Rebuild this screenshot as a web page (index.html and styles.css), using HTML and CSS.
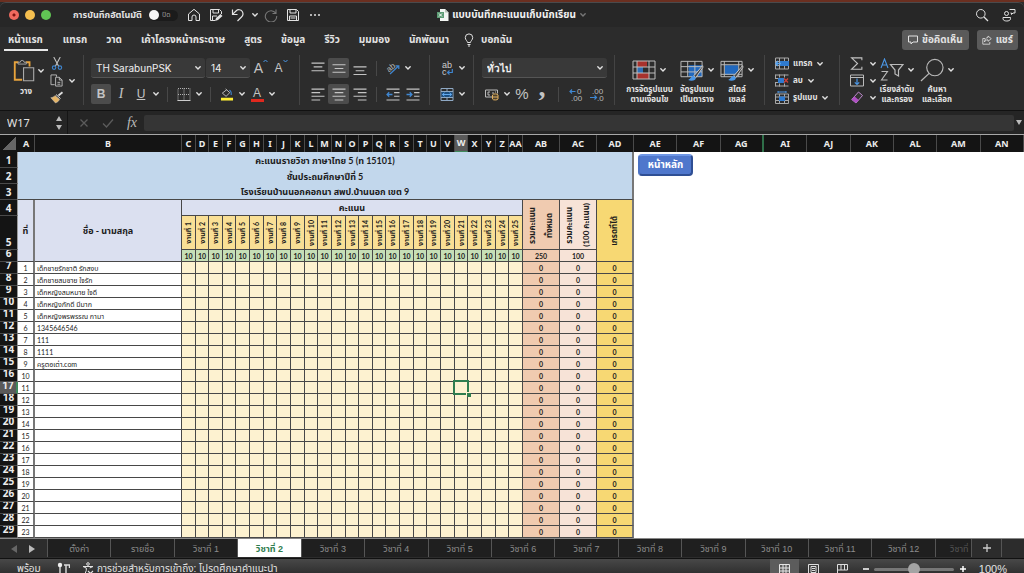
FILE: index.html
```
<!DOCTYPE html>
<html lang="th">
<head>
<meta charset="utf-8">
<meta name="viewport" content="width=device-width, initial-scale=1">
<title>แบบบันทึกคะแนนเก็บนักเรียน</title>
<link rel="stylesheet" href="styles.css">
</head>
<body>
<svg class="defs" aria-hidden="true">
  <symbol id="chev" viewBox="0 0 8 8"><path d="M1.8 2.8 4 5l2.200-2.200" fill="none" stroke="currentColor" stroke-width="1.400" stroke-linecap="round"/></symbol>
  <symbol id="home" viewBox="0 0 14 14"><path d="M1.500 6 7 1.300 12.500 6v6.500H9V9a2 2 0 0 0-4 0v3.500H1.500z" fill="none" stroke="currentColor" stroke-linejoin="round"/></symbol>
  <symbol id="disk" viewBox="0 0 14 14"><path d="M1.500 1.500h9l2 2v9h-11zM4 1.500v3.500h6V1.500M3.500 12.500V8h7v4.500M4.500 10h5" fill="none" stroke="currentColor"/></symbol>
  <symbol id="diskpen" viewBox="0 0 14 14"><path d="M6 12.500H1.500v-11h9l2 2V6M4 1.500v3.500h5.500V1.500M3.500 12.500V8H8" fill="none" stroke="currentColor"/><path d="M6 13l1-3 4.500-4 2 2-4.500 4z" fill="currentColor"/></symbol>
  <symbol id="undo" viewBox="0 0 14 14"><path d="M1.500 1.500v5h5M1.800 6.200 5 3c2-2 5-1.500 6.300.5 1.200 2 .7 4-.8 5.500L6.500 13" fill="none" stroke="currentColor" stroke-width="1.200"/></symbol>
  <symbol id="redo" viewBox="0 0 14 14"><path d="M12 1.500v4H8.500M11.800 5.300A5.700 5.700 0 1 0 12.700 8" fill="none" stroke="#777" stroke-width="1.100"/></symbol>
  <symbol id="search" viewBox="0 0 14 14"><circle cx="5.800" cy="5.800" r="4.300" fill="none" stroke="currentColor"/><path d="m9 9 4 4" stroke="currentColor" stroke-width="1.200"/></symbol>
  <symbol id="person" viewBox="0 0 14 14"><circle cx="4.500" cy="5.500" r="2" fill="none" stroke="currentColor"/><path d="M1 9.500h7.500v1.200C8.500 12.500 6.500 13 4.800 13S1 12.500 1 10.700zM7.500 1.500H13V5h-2L9.500 6.500V5h-1" fill="none" stroke="currentColor"/></symbol>
  <symbol id="xls" viewBox="0 0 12 14"><path d="M3 1h5l3.500 3.500V13H3z" fill="#f3f6f3"/><path d="M8 1v3.500h3.500z" fill="#b8c4b8"/><path d="M0 4h7v6H0z" fill="#5c9c74"/><path d="m2 5.500 3 3m0-3-3 3" stroke="#fff"/></symbol>
  <symbol id="bulb" viewBox="0 0 10 14"><path d="M3.500 9.500C3.500 8 1.300 7 1.300 4.600a3.700 3.700 0 0 1 7.400 0C8.700 7 6.500 8 6.500 9.500zM3.500 11.500h3M4 13h2" fill="none" stroke="currentColor"/></symbol>
  <symbol id="bubble" viewBox="0 0 10 10"><path d="M.5 1h9v6H5L3 9V7H.5z" fill="none" stroke="currentColor"/></symbol>
  <symbol id="share" viewBox="0 0 10 10"><path d="M3 3.500H.800v5.700h7V7M6 1l3.300 2.700L6 6.300V4.800C4.200 4.800 3 5.500 2.500 7c0-2.500 1.500-4.300 3.500-4.500z" fill="none" stroke="currentColor" stroke-width=".8"/></symbol>
  <symbol id="paste" viewBox="0 0 24 26"><path d="M10 22.500H2v-19h4M14 3.500h4V8" fill="none" stroke="#e8a33c" stroke-width="2"/><path d="M5.500 5.500V3.500H8a2 2 0 0 1 4 0h2.500v2z" fill="#2c2c2c" stroke="#aaa"/><path d="M11.500 9.500h11v14h-11z" fill="#333" stroke="#aaa" stroke-width="1.200"/></symbol>
  <symbol id="cut" viewBox="0 0 12 12"><path d="M3 0l4.500 8.500M9 0 4.500 8.500" stroke="#c4c4c4" fill="none"/><circle cx="3.300" cy="9.800" r="1.600" fill="none" stroke="#3f86d0"/><circle cx="8.700" cy="9.800" r="1.600" fill="none" stroke="#3f86d0"/></symbol>
  <symbol id="copy" viewBox="0 0 14 14"><path d="M4.500 11.500h-4V1h6v2" fill="none" stroke="#bbb"/><path d="M5.500 3.500h4l3 3v6.500h-7zM9.500 3.500v3h3M7.500 9h3M7.500 11h3" fill="none" stroke="#bbb"/></symbol>
  <symbol id="brush" viewBox="0 0 14 12"><path d="M12.500.8 8.500 4" stroke="#ddd" stroke-width="1.800"/><path d="m6 3 4.500 4" stroke="#ddd"/><path d="M5 4C4 5.500 2.500 6 .8 6.200L5.500 11.500C7.500 10.800 9 9.500 9.500 7.800z" fill="#e6b566" stroke="#c9c9c9" stroke-width=".5"/></symbol>
  <symbol id="grid" viewBox="0 0 13 13"><path d="M.5.500h12v12H.5zM6.500.500v12M.5 6.500h12" fill="none" stroke="#b0b0b0" stroke-dasharray="1 1"/><path d="M0 12.500h13" stroke="#ccc"/></symbol>
  <symbol id="bucket" viewBox="0 0 14 14"><path d="m5.500 1 4.500 4-4 4L2 5.500 6.500 2" fill="none" stroke="#c4c4c4"/><path d="M9.500 2.500c2 .5 2.300 2 2 5" fill="none" stroke="#3f86d0" stroke-width="1.200"/><path d="M.5 10.500h13v3H.5z" fill="#ffef36"/></symbol>
  <symbol id="al" viewBox="0 0 12 12"><path d="M0 1h12M0 4.300h8M0 7.600h12M0 11h8" stroke="currentColor"/></symbol>
  <symbol id="ac" viewBox="0 0 12 12"><path d="M0 1h12M2 4.300h8M0 7.600h12M2 11h8" stroke="currentColor"/></symbol>
  <symbol id="ar" viewBox="0 0 12 12"><path d="M0 1h12M4 4.300h8M0 7.600h12M4 11h8" stroke="currentColor"/></symbol>
  <symbol id="vt" viewBox="0 0 12 12"><path d="M0 1h12M2 4.500h8M0 8h12" stroke="currentColor"/></symbol>
  <symbol id="vm" viewBox="0 0 12 12"><path d="M0 2.500h12M2 6h8M0 9.500h12" stroke="currentColor"/></symbol>
  <symbol id="vb" viewBox="0 0 12 12"><path d="M0 4.500h12M2 8h8M0 11.500h12" stroke="currentColor"/></symbol>
  <symbol id="outd" viewBox="0 0 12 12"><path d="M0 1h12M7 4.300h5M7 7.600h5M0 11h12" stroke="currentColor"/><path d="M5.500 6H.5m2-2-2 2 2 2" fill="none" stroke="#3f86d0" stroke-width="1.200"/></symbol>
  <symbol id="ind" viewBox="0 0 12 12"><path d="M0 1h12M7 4.300h5M7 7.600h5M0 11h12" stroke="currentColor"/><path d="M0 6h5M3 4l2 2-2 2" fill="none" stroke="#3f86d0" stroke-width="1.200"/></symbol>
  <symbol id="merge" viewBox="0 0 13 13"><path d="M.5.500h12v12H.5zM.5 3.500h12M.5 9.500h12M6.500.500v3M6.500 9.500v3" fill="none" stroke="#8fa9c4"/><path d="M1 4h11v5H1z" fill="#1d4f80"/><path d="M2 6.500h9M4 4.800 2 6.500l2 1.700M9 4.800l2 1.700-2 1.700" fill="none" stroke="#62aaf0"/></symbol>
  <symbol id="money" viewBox="0 0 14 12"><path d="M7 8.500H.5v-7h12V5M5 3.500H3v3h2M8 3.500v2M10 3.500h1" fill="none" stroke="#bbb"/><path d="M7.500 6.500C7.500 5 13 5 13 6.500v4c0 1.300-5.500 1.300-5.500 0zM7.500 8.500h5.500" fill="#4a4030" stroke="#e0b060"/></symbol>
  <symbol id="cond" viewBox="0 0 24 20"><path d="M5 1h10v6H5zM5 13h12v6H5z" fill="#a8322d"/><path d="M5 7h6v6H5z" fill="#2f6fb5"/><path d="M1 1h22v18H1zM5 1v18M17 1v18M1 7h22M1 13h22" fill="none" stroke="#bdbdbd"/></symbol>
  <symbol id="ftable" viewBox="0 0 25 24"><path d="M9 7h14v12H9z" fill="#2168bd"/><path d="M1 3h22v16H1zM8 3v16M15.500 3v16M1 8.500h22M1 14h22" fill="none" stroke="#bdbdbd"/><path d="M23.500 7.500 14.500 18l2 2 7.500-11z" fill="#444" stroke="#ccc"/><path d="M14 18c-2 .3-2.500 2.500-5.500 4.500 3.500 1.500 8.500.5 8-2.500z" fill="#4b97e6"/></symbol>
  <symbol id="fcell" viewBox="0 0 25 24"><path d="M5 7h14v10H5z" fill="#2168bd"/><path d="M1 3h22v16H1zM4.500 3v16M19.500 3v16M1 6.500h22M1 16.500h22" fill="none" stroke="#bdbdbd"/><path d="M23.500 7.500 14.500 18l2 2 7.500-11z" fill="#444" stroke="#ccc"/><path d="M14 18c-2 .3-2.500 2.500-5.500 4.500 3.500 1.500 8.500.5 8-2.500z" fill="#4b97e6"/></symbol>
  <symbol id="cins" viewBox="0 0 14 12"><path d="M.5.500h13v11H.5zM4.500.500v11M9.500.500v11M.5 4h13M.5 8h13" fill="none" stroke="#a8a8a8"/><path d="M5 3.500h9v5H5z" fill="#2f7bd0"/><path d="M6 6H1m2-2.500L.8 6 3 8.500" fill="none" stroke="#5aa5f0" stroke-width="1.300"/></symbol>
  <symbol id="cdel" viewBox="0 0 14 12"><path d="M.5.500h13M.5 11.500h13M.5 0v3.500M4.500 0v3M9.500 0v3M4.500 9v3M9.500 9v3M.5 8.500V12M0 4h3M0 8h3" fill="none" stroke="#a8a8a8"/><path d="M3 3.500h6v5H3z" fill="#2f7bd0"/><path d="m9 4 4 4m0-4L9 8" stroke="#d0423a" stroke-width="1.300"/></symbol>
  <symbol id="cfmt" viewBox="0 0 14 13"><path d="M.5 3h13v9.500H.5zM4.500 3v9.500M9.500 3v9.500M.5 6h13M.5 9.500h13" fill="none" stroke="#a8a8a8"/><path d="M4 5.500h6v4.500H4z" fill="#2f7bd0"/><path d="M3 1h8M3 0v2M11 0v2" stroke="#4b97e6"/></symbol>
  <symbol id="sum" viewBox="0 0 12 12"><path d="M10.500 3V.8H1L6.500 6 1 11.300h9.500V9" fill="none" stroke="#c4c4c4"/></symbol>
  <symbol id="fill" viewBox="0 0 14 12"><path d="M.5.500h13v11H.5zM.5 3h13" fill="none" stroke="#bbb"/><path d="M7 4v6M4.800 7.800 7 10l2.200-2.200" fill="none" stroke="#4b97e6" stroke-width="1.200"/></symbol>
  <symbol id="erase" viewBox="0 0 13 13"><path d="m8 1 4 3.500L5.500 12 1.200 8.500z" fill="#333" stroke="#c18ad0"/><path d="m4 5.300 4.200 3.600L5.500 12 1.200 8.500z" fill="#b04fc4"/></symbol>
  <symbol id="sortf" viewBox="0 0 24 24"><path d="m1 10 3.500-9L8 10M2.200 7h4.600" fill="none" stroke="#4b97e6" stroke-width="1.100"/><path d="M1.500 13.500h6L1.500 22h6" fill="none" stroke="#bbb" stroke-width="1.100"/><path d="M10.500 6.500h12.500l-4.500 5.500v6l-3.500-2V12z" fill="none" stroke="#bbb" stroke-width="1.200"/></symbol>
  <symbol id="find" viewBox="0 0 25 24"><circle cx="15.500" cy="9.500" r="8.500" fill="none" stroke="#b8b8b8" stroke-width="1.200"/><path d="M9.500 15.500 1 23.500" stroke="#b8b8b8" stroke-width="1.300"/></symbol>
  <symbol id="acc" viewBox="0 0 12 14"><circle cx="6" cy="2" r="1.300" fill="none" stroke="currentColor"/><path d="M1 4.500 4.300 6v2.500L2.500 13M11 4.500 7.700 6M1 4.500h10" fill="none" stroke="currentColor"/><path d="m6 9 5 5m0-5-5 5" stroke="currentColor" stroke-width="1.200"/></symbol>
  <symbol id="macro" viewBox="0 0 13 14"><circle cx="3" cy="3" r="2.200" fill="#eee"/><path d="M7 3h5.500v3M9 3v9M0 12.500h6M3 5v7" fill="none" stroke="#ddd" stroke-width="1.400"/></symbol>
  <symbol id="vnorm" viewBox="0 0 11 11"><path d="M.5.500h10v10H.5zM4 .5v10M7 .5v10M.5 4h10M.5 7h10" fill="none" stroke="#e6e6e6"/></symbol>
  <symbol id="vpage" viewBox="0 0 11 11"><path d="M.5.500h10v10H.5zM3 2.500h5v6H3zM4 4.500h3M4 6.500h3" fill="none" stroke="#ddd"/></symbol>
  <symbol id="vbreak" viewBox="0 0 11 11"><path d="M.5 11V.5h10V6H.5M4 .5V6M7.500.500V6" fill="none" stroke="#ddd"/></symbol>
</svg>

<header class="titlebar">
  <div class="quick">
    <span class="light red"></span><span class="light amber"></span><span class="light green"></span>
    <label class="auto" for="autosave">การบันทึกอัตโนมัติ</label>
    <span class="toggle"><input type="checkbox" id="autosave"><span>ปิด</span></span>
    <button class="q" aria-label="หน้าแรก"><svg><use href="#home"/></svg></button>
    <button class="q" aria-label="บันทึกเป็น"><svg><use href="#diskpen"/></svg></button>
    <button class="q" aria-label="เลิกทำ"><svg><use href="#undo"/></svg></button>
    <button class="chev" aria-label="ตัวเลือกเลิกทำ"><svg><use href="#chev"/></svg></button>
    <button class="q" aria-label="ทำซ้ำ"><svg><use href="#redo"/></svg></button>
    <button class="q" aria-label="บันทึก"><svg><use href="#disk"/></svg></button>
    <button class="q dots" aria-label="เพิ่มเติม"><i></i><i></i><i></i></button>
  </div>
  <h1 class="doc"><svg><use href="#xls"/></svg>แบบบันทึกคะแนนเก็บนักเรียน<svg class="dim"><use href="#chev"/></svg></h1>
  <div class="right">
    <button class="q" aria-label="ค้นหา"><svg><use href="#search"/></svg></button>
    <button class="q" aria-label="บัญชี"><svg><use href="#person"/></svg></button>
  </div>
</header>

<nav class="menu">
  <a href="#" class="on">หน้าแรก</a><a href="#">แทรก</a><a href="#">วาด</a><a href="#">เค้าโครงหน้ากระดาษ</a><a href="#">สูตร</a><a href="#">ข้อมูล</a><a href="#">รีวิว</a><a href="#">มุมมอง</a><a href="#">นักพัฒนา</a><a href="#" class="tell"><svg><use href="#bulb"/></svg>บอกฉัน</a>
  <span class="grow"></span>
  <button class="pill"><svg><use href="#bubble"/></svg>ข้อคิดเห็น</button>
  <button class="pill"><svg><use href="#share"/></svg>แชร์</button>
</nav>

<section class="ribbon">
  <div class="group clip">
    <button class="big paste"><span class="pic"><svg><use href="#paste"/></svg><svg class="c"><use href="#chev"/></svg></span>วาง</button>
    <div class="stack">
      <button class="mini" aria-label="ตัด"><svg><use href="#cut"/></svg></button>
      <button class="mini" aria-label="คัดลอก"><svg><use href="#copy"/></svg><svg class="c"><use href="#chev"/></svg></button>
      <button class="mini" aria-label="ตัวคัดวางรูปแบบ"><svg><use href="#brush"/></svg></button>
    </div>
  </div>
  <div class="group font">
    <div class="line">
      <span class="pick name"><select aria-label="แบบอักษร"><option>TH SarabunPSK</option></select><svg><use href="#chev"/></svg></span>
      <span class="pick size"><select aria-label="ขนาดแบบอักษร"><option>14</option></select><svg><use href="#chev"/></svg></span>
      <button class="b grown" aria-label="ขยายแบบอักษร">A<svg viewBox="0 0 5 12"><path d="M.5 4 2.500 2l2 2" fill="none" stroke="#4b97e6"/></svg></button>
      <button class="b grown small" aria-label="ย่อแบบอักษร">A<svg viewBox="0 0 5 12"><path d="m.5 2 2 2 2-2" fill="none" stroke="#4b97e6"/></svg></button>
    </div>
    <div class="line">
      <button class="b on bold">B</button><button class="b ital">I</button><button class="b under">U</button><button class="chev" aria-label="ขีดเส้นใต้"><svg><use href="#chev"/></svg></button>
      <span class="sep"></span>
      <button class="b" aria-label="เส้นขอบ"><svg><use href="#grid"/></svg></button><button class="chev" aria-label="ชนิดเส้นขอบ"><svg><use href="#chev"/></svg></button>
      <span class="sep"></span>
      <button class="b" aria-label="สีเติม"><svg><use href="#bucket"/></svg></button><button class="chev" aria-label="เลือกสีเติม"><svg><use href="#chev"/></svg></button>
      <button class="b"><span class="ink">A</span></button><button class="chev" aria-label="เลือกสีอักษร"><svg><use href="#chev"/></svg></button>
    </div>
  </div>
  <div class="group align">
    <div class="line">
      <button class="b w" aria-label="ชิดบน"><svg><use href="#vt"/></svg></button><button class="b w on" aria-label="กึ่งกลางแนวตั้ง"><svg><use href="#vm"/></svg></button><button class="b w" aria-label="ชิดล่าง"><svg><use href="#vb"/></svg></button>
      <span class="sep"></span>
      <button class="b" aria-label="การวางแนว"><svg viewBox="0 0 14 13"><text x="1" y="9" font-size="8" fill="#bbb" transform="rotate(-40 4 7)">ab</text><path d="M4 12 12.500 4M9.500 3.800h3.300V7" fill="none" stroke="#3f86d0" stroke-width="1.200"/></svg></button><button class="chev" aria-label="เลือกการวางแนว"><svg><use href="#chev"/></svg></button>
    </div>
    <div class="line">
      <button class="b w" aria-label="ชิดซ้าย"><svg><use href="#al"/></svg></button><button class="b w on" aria-label="กึ่งกลาง"><svg><use href="#ac"/></svg></button><button class="b w" aria-label="ชิดขวา"><svg><use href="#ar"/></svg></button>
      <span class="sep"></span>
      <button class="b" aria-label="ลดการเยื้อง"><svg><use href="#outd"/></svg></button><button class="b" aria-label="เพิ่มการเยื้อง"><svg><use href="#ind"/></svg></button>
    </div>
  </div>
  <div class="group wrap">
    <div class="line"><button class="b tall" aria-label="ตัดข้อความ"><svg viewBox="0 0 12 15"><text x="1" y="7" font-size="9" fill="#ccc">ab</text><text x="1" y="14" font-size="9" fill="#ccc">c</text><path d="M11.300 8v3.500H6.500m2-2-2 2 2 2" fill="none" stroke="#3f86d0" stroke-width="1.200"/></svg></button><button class="chev" aria-label="ตัวเลือกตัดข้อความ"><svg><use href="#chev"/></svg></button></div>
    <div class="line"><button class="b" aria-label="ผสานเซลล์"><svg><use href="#merge"/></svg></button><button class="chev" aria-label="ตัวเลือกผสาน"><svg><use href="#chev"/></svg></button></div>
  </div>
  <div class="group number">
    <div class="line"><span class="pick full"><select aria-label="รูปแบบตัวเลข"><option>ทั่วไป</option></select><svg><use href="#chev"/></svg></span></div>
    <div class="line">
      <button class="b" aria-label="สกุลเงิน"><svg><use href="#money"/></svg></button><button class="chev" aria-label="เลือกสกุลเงิน"><svg><use href="#chev"/></svg></button>
      <button class="b sym">%</button><button class="b comma">,</button>
      <span class="sep"></span>
      <button class="b w" aria-label="เพิ่มทศนิยม"><svg viewBox="0 0 14 13"><text x="8" y="6" font-size="8" fill="#bbb">0</text><text x="2" y="13" font-size="8" fill="#bbb">.00</text><path d="M6.500 3.500H1m2-2-2 2 2 2" fill="none" stroke="#3f86d0" stroke-width="1.200"/></svg></button><button class="b w" aria-label="ลดทศนิยม"><svg viewBox="0 0 14 13"><text x="2" y="6" font-size="8" fill="#bbb">.00</text><text x="7" y="13" font-size="8" fill="#bbb">.0</text><path d="M0 9.500h6.500m-2-2 2 2-2 2" fill="none" stroke="#3f86d0" stroke-width="1.200"/></svg></button>
    </div>
  </div>
  <div class="group styles">
    <button class="big cond"><span class="pic"><svg><use href="#cond"/></svg><svg class="c"><use href="#chev"/></svg></span>การจัดรูปแบบ<br>ตามเงื่อนไข</button>
    <button class="big tabl"><span class="pic"><svg><use href="#ftable"/></svg><svg class="c"><use href="#chev"/></svg></span>จัดรูปแบบ<br>เป็นตาราง</button>
    <button class="big cell"><span class="pic"><svg><use href="#fcell"/></svg><svg class="c"><use href="#chev"/></svg></span>สไตล์<br>เซลล์</button>
  </div>
  <div class="group cells">
    <div class="stack">
      <button class="mini"><svg><use href="#cins"/></svg>แทรก<svg class="c"><use href="#chev"/></svg></button>
      <button class="mini"><svg><use href="#cdel"/></svg>ลบ<svg class="c"><use href="#chev"/></svg></button>
      <button class="mini"><svg><use href="#cfmt"/></svg>รูปแบบ<svg class="c"><use href="#chev"/></svg></button>
    </div>
  </div>
  <div class="group edit">
    <div class="stack">
      <button class="mini" aria-label="ผลรวม"><svg><use href="#sum"/></svg><svg class="c"><use href="#chev"/></svg></button>
      <button class="mini" aria-label="เติม"><svg><use href="#fill"/></svg><svg class="c"><use href="#chev"/></svg></button>
      <button class="mini" aria-label="ล้าง"><svg><use href="#erase"/></svg><svg class="c"><use href="#chev"/></svg></button>
    </div>
    <button class="big"><span class="pic"><svg><use href="#sortf"/></svg><svg class="c"><use href="#chev"/></svg></span>เรียงลำดับ<br>และกรอง</button>
    <button class="big"><span class="pic"><svg><use href="#find"/></svg><svg class="c"><use href="#chev"/></svg></span>ค้นหา<br>และเลือก</button>
  </div>
</section>

<section class="formula">
  <input class="ref" aria-label="กล่องชื่อ" value="W17">
  <span class="spin"><i class="up"></i><i class="down"></i></span>
  <button class="fx dimmed" aria-label="ยกเลิก"><svg viewBox="0 0 10 10"><path d="m1.500 1.500 7 7m0-7-7 7" stroke="currentColor" stroke-width="1.300"/></svg></button>
  <button class="fx dimmed" aria-label="ใส่"><svg viewBox="0 0 12 10"><path d="m1 5.500 3.500 3.500L11 1.500" fill="none" stroke="currentColor" stroke-width="1.300"/></svg></button>
  <button class="fx f"><i>f</i>x</button>
  <input class="bar" aria-label="แถบสูตร">
  <button class="expand" aria-label="ขยาย"><i class="down"></i></button>
</section>

<main class="sheet">
  <table id="grid-table"></table>
</main>

<nav class="sheets">
  <button class="arrow l" aria-label="ก่อนหน้า"></button><button class="arrow r" aria-label="ถัดไป"></button>
  <div class="tabs" id="tabs"></div>
  <button class="cut">วิชาที่ 13</button>
  <button class="add" aria-label="เพิ่มแผ่นงาน"><svg viewBox="0 0 10 10"><path d="M5 1v8M1 5h8" stroke="currentColor" stroke-width="1.300"/></svg></button>
</nav>

<footer class="status">
  <span class="ready">พร้อม</span>
  <svg class="mac"><use href="#macro"/></svg>
  <button class="help"><svg><use href="#acc"/></svg>การช่วยสำหรับการเข้าถึง: โปรดศึกษาคำแนะนำ</button>
  <span class="grow"></span>
  <button class="view on" aria-label="ปกติ"><svg><use href="#vnorm"/></svg></button>
  <button class="view" aria-label="เค้าโครงหน้า"><svg><use href="#vpage"/></svg></button>
  <button class="view" aria-label="ตัวแบ่งหน้า"><svg><use href="#vbreak"/></svg></button>
  <button class="z" aria-label="ย่อ"><svg viewBox="0 0 8 8"><path d="M1 4h6" stroke="#fff" stroke-width="1.500"/></svg></button>
  <input type="range" class="zoom" aria-label="ย่อ/ขยาย" min="0" max="100" value="50">
  <button class="z" aria-label="ขยาย"><svg viewBox="0 0 8 8"><path d="M1 4h6M4 1v6" stroke="#fff" stroke-width="1.500"/></svg></button>
  <span class="pct">100%</span>
</footer>
<script src="script.js"></script>
</body>
</html>
```
FILE: styles.css
```
* { box-sizing: border-box; }
body {
  margin: 0;
  height: 100vh;
  overflow: hidden;
  display: flex;
  flex-direction: column;
  background: #2c2c2c;
  color: #e2e2e2;
  font: 10px/14px "Liberation Sans", "Noto Sans Thai", sans-serif;
  border-top: 2px solid #6b2f20;
}
body > * { flex: none; }
.defs { position: absolute; width: 0; height: 0; }
button, input, select { font: inherit; color: inherit; background: none; border: 0; padding: 0; margin: 0; }
button { display: flex; align-items: center; justify-content: center; white-space: nowrap; flex: none; }
a { color: inherit; text-decoration: none; }
svg { display: block; flex: none; }
.grow { flex: 1; }
.chev { width: 10px; }
.chev svg, .c { width: 8px; height: 8px; }

.titlebar {
  display: grid;
  grid-template-columns: 1fr auto 1fr;
  align-items: center;
  height: 25px;
  background: #272727;
  border-top: 1px solid #4a4a4c;
  border-radius: 6px 6px 0 0;
}
.quick { display: flex; align-items: center; padding-left: 9px; }
.light { width: 10px; height: 10px; border-radius: 50%; margin-right: 6px; }
.red { background: radial-gradient(circle, #7d1410 1px, #ee6a5f 2px); }
.amber { background: #f5bf4f; }
.green { background: #61c554; }
.auto { width: 76px; margin-left: 16px; font-size: 9px; font-weight: bold; white-space: nowrap; }
.toggle { display: flex; align-items: center; width: 29px; height: 11px; border-radius: 6px; background: #1b1b1b; font-size: 7px; color: #999; margin-right: 5px; }
.toggle input { appearance: none; width: 10px; height: 10px; border-radius: 50%; background: #f4f4f4; margin-right: 3px; }
.q { width: 22px; height: 16px; }
.q svg { width: 14px; height: 14px; }
.quick .chev { margin-left: 1px; }
.dots { gap: 2px; }
.dots i { width: 2px; height: 2px; border-radius: 50%; background: #e2e2e2; }
.doc { display: flex; align-items: center; gap: 3px; margin: 0; font-size: 10px; line-height: 16px; color: #f2f2f2; }
.doc svg { width: 12px; height: 14px; }
.doc .dim { width: 8px; height: 8px; color: #777; }
.right { display: flex; justify-content: flex-end; gap: 5px; padding-right: 4px; }

.menu { display: flex; align-items: center; height: 26px; padding: 0 10px 0 4px; font-weight: bold; font-size: 10px; }
.menu a { display: flex; align-items: center; height: 22px; margin-right: 19px; white-space: nowrap; }
.menu .on { padding: 2px 5px 0 4px; margin-right: 15px; border-bottom: 2px solid #e8e8e8; }
.menu .tell { gap: 7px; margin-left: -4px; }
.tell svg { width: 10px; height: 14px; }
.pill { height: 20px; padding: 0 6px; gap: 4px; border-radius: 3px; background: #5a5a5a; margin-left: 8px; font-weight: bold; }
.pill:last-child { padding: 0 5px; margin-right: -4px; }
.pill svg { width: 10px; height: 10px; }

.ribbon { display: flex; height: 58px; padding: 2px 0 5px; overflow: hidden; border-bottom: 1px solid #111; font-weight: bold; font-size: 8px; }
.group { display: flex; flex: none; border-right: 1px solid #444; }
.line { display: flex; align-items: center; height: 20px; }
.font, .align, .wrap, .number { flex-direction: column; gap: 6px; padding: 3px 6px 0 7px; }
.big { flex-direction: column; justify-content: flex-start; line-height: 10px; }
.pic { display: flex; align-items: center; gap: 3px; height: 32px; }
.pic svg:first-child { width: 24px; height: 24px; }
.stack { display: flex; flex-direction: column; justify-content: space-between; }
.mini { height: 17px; gap: 4px; justify-content: flex-start; line-height: 14px; }
.mini svg:first-child { width: 14px; height: 13px; }
.clip { width: 84px; padding-left: 12px; gap: 2px; }
.paste { align-items: flex-start; width: 36px; text-indent: 8px; }
.paste .pic { gap: 1px; }
.font { width: 216px; }
.align { width: 130px; }
.wrap { width: 44px; }
.number { width: 141px; padding-left: 8px; }
.styles { width: 150px; padding-left: 10px; }
.cond { width: 49px; margin-right: 2px; }
.tabl { width: 42px; }
.cell { width: 38px; }
.cells { width: 75px; padding-left: 10px; }
.edit { padding-left: 10px; border: 0; }
.edit .mini { width: 27px; gap: 5px; }
.edit .big { width: 40px; }
.pick { position: relative; display: flex; height: 20px; margin-right: 1px; border-radius: 3px; background: #393939; border-bottom: 1px solid #555; }
.pick select { appearance: none; width: 100%; padding-left: 5px; font-size: 10px; font-weight: normal; font-family: Inter, sans-serif; color: #f0f0f0; }
.pick svg { position: absolute; right: 3px; top: 6px; width: 8px; height: 8px; pointer-events: none; }
.name { width: 114px; }
.size { width: 44px; }
.full { width: 125px; }
.full select { font-weight: bold; }
.b { width: 20px; height: 20px; border-radius: 2px; font-size: 12px; font-weight: normal; color: #c4c4c4; }
.b.w { width: 21px; }
.b svg { width: 14px; height: 13px; overflow: visible; }
.b.tall svg { width: 12px; height: 15px; }
.b.on { background: #4c4c4c; }
.bold { font-weight: bold; }
.ital { font-family: "Liberation Serif", serif; font-style: italic; font-size: 14px; }
.under { text-decoration: underline; }
.grown { font-size: 14px; }
.small { font-size: 12px; }
.b.grown svg { width: 5px; height: 12px; align-self: flex-start; }
.ink { width: 13px; line-height: 12px; border-bottom: 3px solid #e0281e; }
.sym { font-size: 15px; }
.comma { font: bold 28px/4px "Liberation Serif", serif; padding-bottom: 14px; }
.sep { width: 13px; height: 15px; background: linear-gradient(#484848, #484848) center / 1px 100% no-repeat; }

.formula { display: flex; align-items: center; height: 24px; background: #252525; border-bottom: 1px solid #a8a8a8; }
.ref { width: 56px; padding-left: 7px; font: 11px "Noto Sans", sans-serif; }
.spin { display: flex; flex-direction: column; gap: 4px; width: 12px; height: 100%; justify-content: center; border-right: 1px solid #151515; }
.up, .down { width: 0; border: 3px solid transparent; border-top-width: 0; border-bottom: 5px solid #bbb; }
.down { border-top: 5px solid #bbb; border-bottom-width: 0; }
.fx { width: 24px; }
.fx svg { width: 12px; height: 10px; }
.dimmed { color: #5c5c5c; }
.fx.f { font: italic 14px "Liberation Serif", serif; color: #bbb; }
.formula .fx:nth-of-type(1) { margin-left: 4px; }
.bar { flex: 1; height: 16px; background: #353535; border-radius: 2px; }
.expand { width: 10px; }

.sheet { background: #fff; color: #1c1c1c; overflow: hidden; }
table { width: 100%; table-layout: fixed; border-collapse: separate; border-spacing: 0; font: 7px/10px Lato, "Noto Sans Thai", sans-serif; }
.cr { width: 18px; }
.ca { width: 17px; }
.cb { width: 147px; }
.c14 { width: 14px; }
.c13 { width: 13px; }
.ct { width: 37px; }
th, td { padding: 0; overflow: hidden; white-space: nowrap; text-align: center; border-right: 1px solid #484848; border-bottom: 1px solid #484848; }
td { padding-top: 1px; }
.heads th { height: 17px; background: #141414; color: #ececec; font: bold 9px/16px "Noto Sans", sans-serif; border-color: #4a4a4a; border-bottom: 0; }
.heads .sel, .rowhead.sel { background: #5a5a5a; }
.heads .sel { border-bottom: 1px solid #3f8a5c; }
.heads .mark { border-right: 2px solid #2f6f49; }
.heads .corner { background: linear-gradient(135deg, #141414 50%, #666 50%); border: 2px solid #141414; }
.rowhead { background: #141414; color: #ececec; font: bold 10px/14px "Noto Sans", sans-serif; border-color: #4a4a4a; border-right: 1px solid #999; }
.rowhead span { display: block; overflow: hidden; height: 11px; line-height: 7px; }
.rowhead.low { vertical-align: bottom; }
.rowhead.sel { border-right: 2px solid #3f8a5c; }
.h16 { height: 16px; }
.h34 { height: 34px; }
.h12 { height: 12px; }
.title { padding-top: 0; background: #c2d7ec; font-weight: bold; font-size: 9px; line-height: 15px; border-bottom: 0; border-right: 2px solid #777; }
.title.last { border-bottom: 1px solid #484848; }
.lav { background: #dbe0f0; font-weight: bold; font-size: 9px; }
.work { background: #f9df95; font-weight: bold; }
.green6 { background: #c6dfb6; font-weight: bold; }
.ab { background: #f0cbb0; font-weight: bold; }
.ac { background: #f7e3d7; font-weight: bold; }
.ad { background: #f7d873; font-weight: bold; border-right: 2px solid #777; }
.score { background: #fdf2d0; }
.colA { border-right: 2px solid #777; }
.nm { text-align: left; padding-left: 2px; }
.up90 { display: inline-block; writing-mode: vertical-rl; transform: rotate(180deg); line-height: 11px; vertical-align: middle; }
.two { line-height: 17px; }
.sum { font-size: 8px; }
.blank { position: relative; background: #fff; border: 0; overflow: visible; }
.cursor { position: relative; overflow: visible; }
.cursor i { position: absolute; z-index: 1; inset: -2px; border: 2px solid #2f7d4f; }
.cursor b { position: absolute; z-index: 2; right: -4px; bottom: -4px; width: 5px; height: 5px; background: #2f7d4f; border: 1px solid #fdf2d0; border-width: 1px 0 0 1px; }
.home-btn { position: absolute; top: 2px; left: 4px; width: 55px; height: 22px; padding-bottom: 2px; border: 2px solid; border-color: #6f97e6 #2f4f94 #2f4f94 #4a72c4; border-radius: 4px; background: #4f77cc; color: #fff; font-weight: bold; font-size: 10px; }

.sheets { display: flex; height: 21px; background: #2c2c2c; border-top: 1px solid #888; border-bottom: 1px solid #111; color: #8c8c8c; font-size: 9px; }
.arrow { width: 18px; margin-left: 5px; }
.arrow.r { margin: 0 6px 0 0; }
.arrow::before { content: ""; border: 4px solid transparent; border-left: 6px solid #bbb; border-right: 0; }
.arrow.l::before { border-right: 6px solid #666; border-left: 0; }
.tabs { display: flex; flex: 1; margin-bottom: 2px; }
.tabs button, .cut { flex: 1 1 0; min-width: 0; height: 18px; padding-top: 2px; background: #1f1f1f; border-left: 1px solid #555; }
.tabs .on { background: #fff; color: #2f7d4f; font-weight: bold; }
.cut { flex: 0 0 36px; justify-content: flex-start; overflow: hidden; padding-left: 14px; color: #555; }
.add { width: 31px; margin-right: 22px; height: 18px; color: #ccc; border: 1px solid #555; border-width: 0 1px; }
.add svg { width: 10px; height: 10px; }

.status { display: flex; align-items: center; height: 20px; padding: 0 17px; background: linear-gradient(#484848, #303030 14px); font-size: 10px; }
.ready { width: 40px; }
.mac { width: 13px; height: 14px; margin-right: 12px; }
.help { gap: 3px; }
.help svg { width: 12px; height: 14px; }
.view { width: 29px; height: 20px; }
.view.on { background: #5c5c5c; }
.view svg { width: 11px; height: 11px; }
.z { width: 14px; margin-left: 2px; }
.z svg { width: 8px; height: 8px; }
.zoom { appearance: none; width: 80px; height: 3px; border-radius: 2px; background: #777; margin-left: 1px; }
.zoom::-webkit-slider-thumb { appearance: none; width: 12px; height: 12px; border-radius: 50%; background: #a4a4a4; }
.pct { margin-left: 9px; font-size: 11px; }
```
FILE: script.js
```
const letters = [...'CDEFGHIJKLMNOPQRSTUVWXYZ', 'AA'];
const wide = i => (i * 16) % 25 < 16 ? 'c14' : 'c13';
const names = ['เด็กชายรักชาติ รักสงบ', 'เด็กชายสมชาย ใจรัก', 'เด็กหญิงสมหมาย ใจดี', 'เด็กหญิงภักดี มีมาก',
  'เด็กหญิงพรพรรณ กามา', '1345646546', '111', '1111', 'ครูตอเต่า.com'];
const far = ['AE', 'AF', 'AG', 'AI', 'AJ', 'AK', 'AL', 'AM', 'AN'];

let html = '<colgroup><col class="cr"><col class="ca"><col class="cb">' +
  letters.map((l, i) => `<col class="${wide(i)}">`).join('') +
  '<col class="ct"><col class="ct"><col class="ct">' + far.map(() => '<col>').join('') + '</colgroup>';

html += '<tr class="heads"><th class="corner"></th><th>A</th><th>B</th>' +
  letters.map(l => `<th${l === 'W' ? ' class="sel"' : ''}>${l}</th>`).join('') +
  '<th>AB</th><th>AC</th><th>AD</th>' +
  far.map(l => `<th${l === 'AG' ? ' class="mark"' : ''}>${l}</th>`).join('') + '</tr>';

html += `<tr><th class="rowhead h16">1</th><td class="title" colspan="30">คะแนนรายวิชา ภาษาไทย 5 (ท 15101)</td>
<td class="blank" colspan="9" rowspan="29"><button class="home-btn">หน้าหลัก</button></td></tr>
<tr><th class="rowhead h16">2</th><td class="title" colspan="30">ชั้นประถมศึกษาปีที่ 5</td></tr>
<tr><th class="rowhead h16">3</th><td class="title last" colspan="30">โรงเรียนบ้านนอกคอกนา สพป.บ้านนอก เขต 9</td></tr>
<tr><th class="rowhead h16">4</th><td class="lav colA" rowspan="3">ที่</td><td class="lav" rowspan="3">ชื่อ - นามสกุล</td>
<td class="lav" colspan="25">คะแนน</td>
<td class="ab sum" rowspan="2"><span class="up90 two">รวมคะแนน<br>ทั้งหมด</span></td>
<td class="ac sum" rowspan="2"><span class="up90 two">รวมคะแนน<br>(100 คะแนน)</span></td>
<td class="ad sum" rowspan="3"><span class="up90">เกรดที่ได้</span></td></tr>`;

html += '<tr><th class="rowhead low h34">5</th>' +
  letters.map((l, i) => `<td class="work"><span class="up90">งานที่ ${i + 1}</span></td>`).join('') + '</tr>';
html += '<tr><th class="rowhead h12"><span>6</span></th>' +
  letters.map(() => '<td class="green6">10</td>').join('') + '<td class="ab">250</td><td class="ac">100</td></tr>';

for (let r = 7; r <= 29; r++) {
  html += `<tr><th class="rowhead h12${r === 17 ? ' sel' : ''}"><span>${r}</span></th>` +
    `<td class="colA">${r - 6}</td><td class="nm">${names[r - 7] || ''}</td>` +
    letters.map(l => l === 'W' && r === 17 ? '<td class="score cursor"><i></i><b></b></td>' : '<td class="score"></td>').join('') +
    '<td class="ab">0</td><td class="ac">0</td><td class="ad">0</td></tr>';
}
document.getElementById('grid-table').innerHTML = html;

const tabs = ['ตั้งค่า', 'รายชื่อ', ...Array.from({ length: 12 }, (_, i) => `วิชาที่ ${i + 1}`)];
document.getElementById('tabs').innerHTML =
  tabs.map(t => `<button${t === 'วิชาที่ 2' ? ' class="on"' : ''}>${t}</button>`).join('');
```
